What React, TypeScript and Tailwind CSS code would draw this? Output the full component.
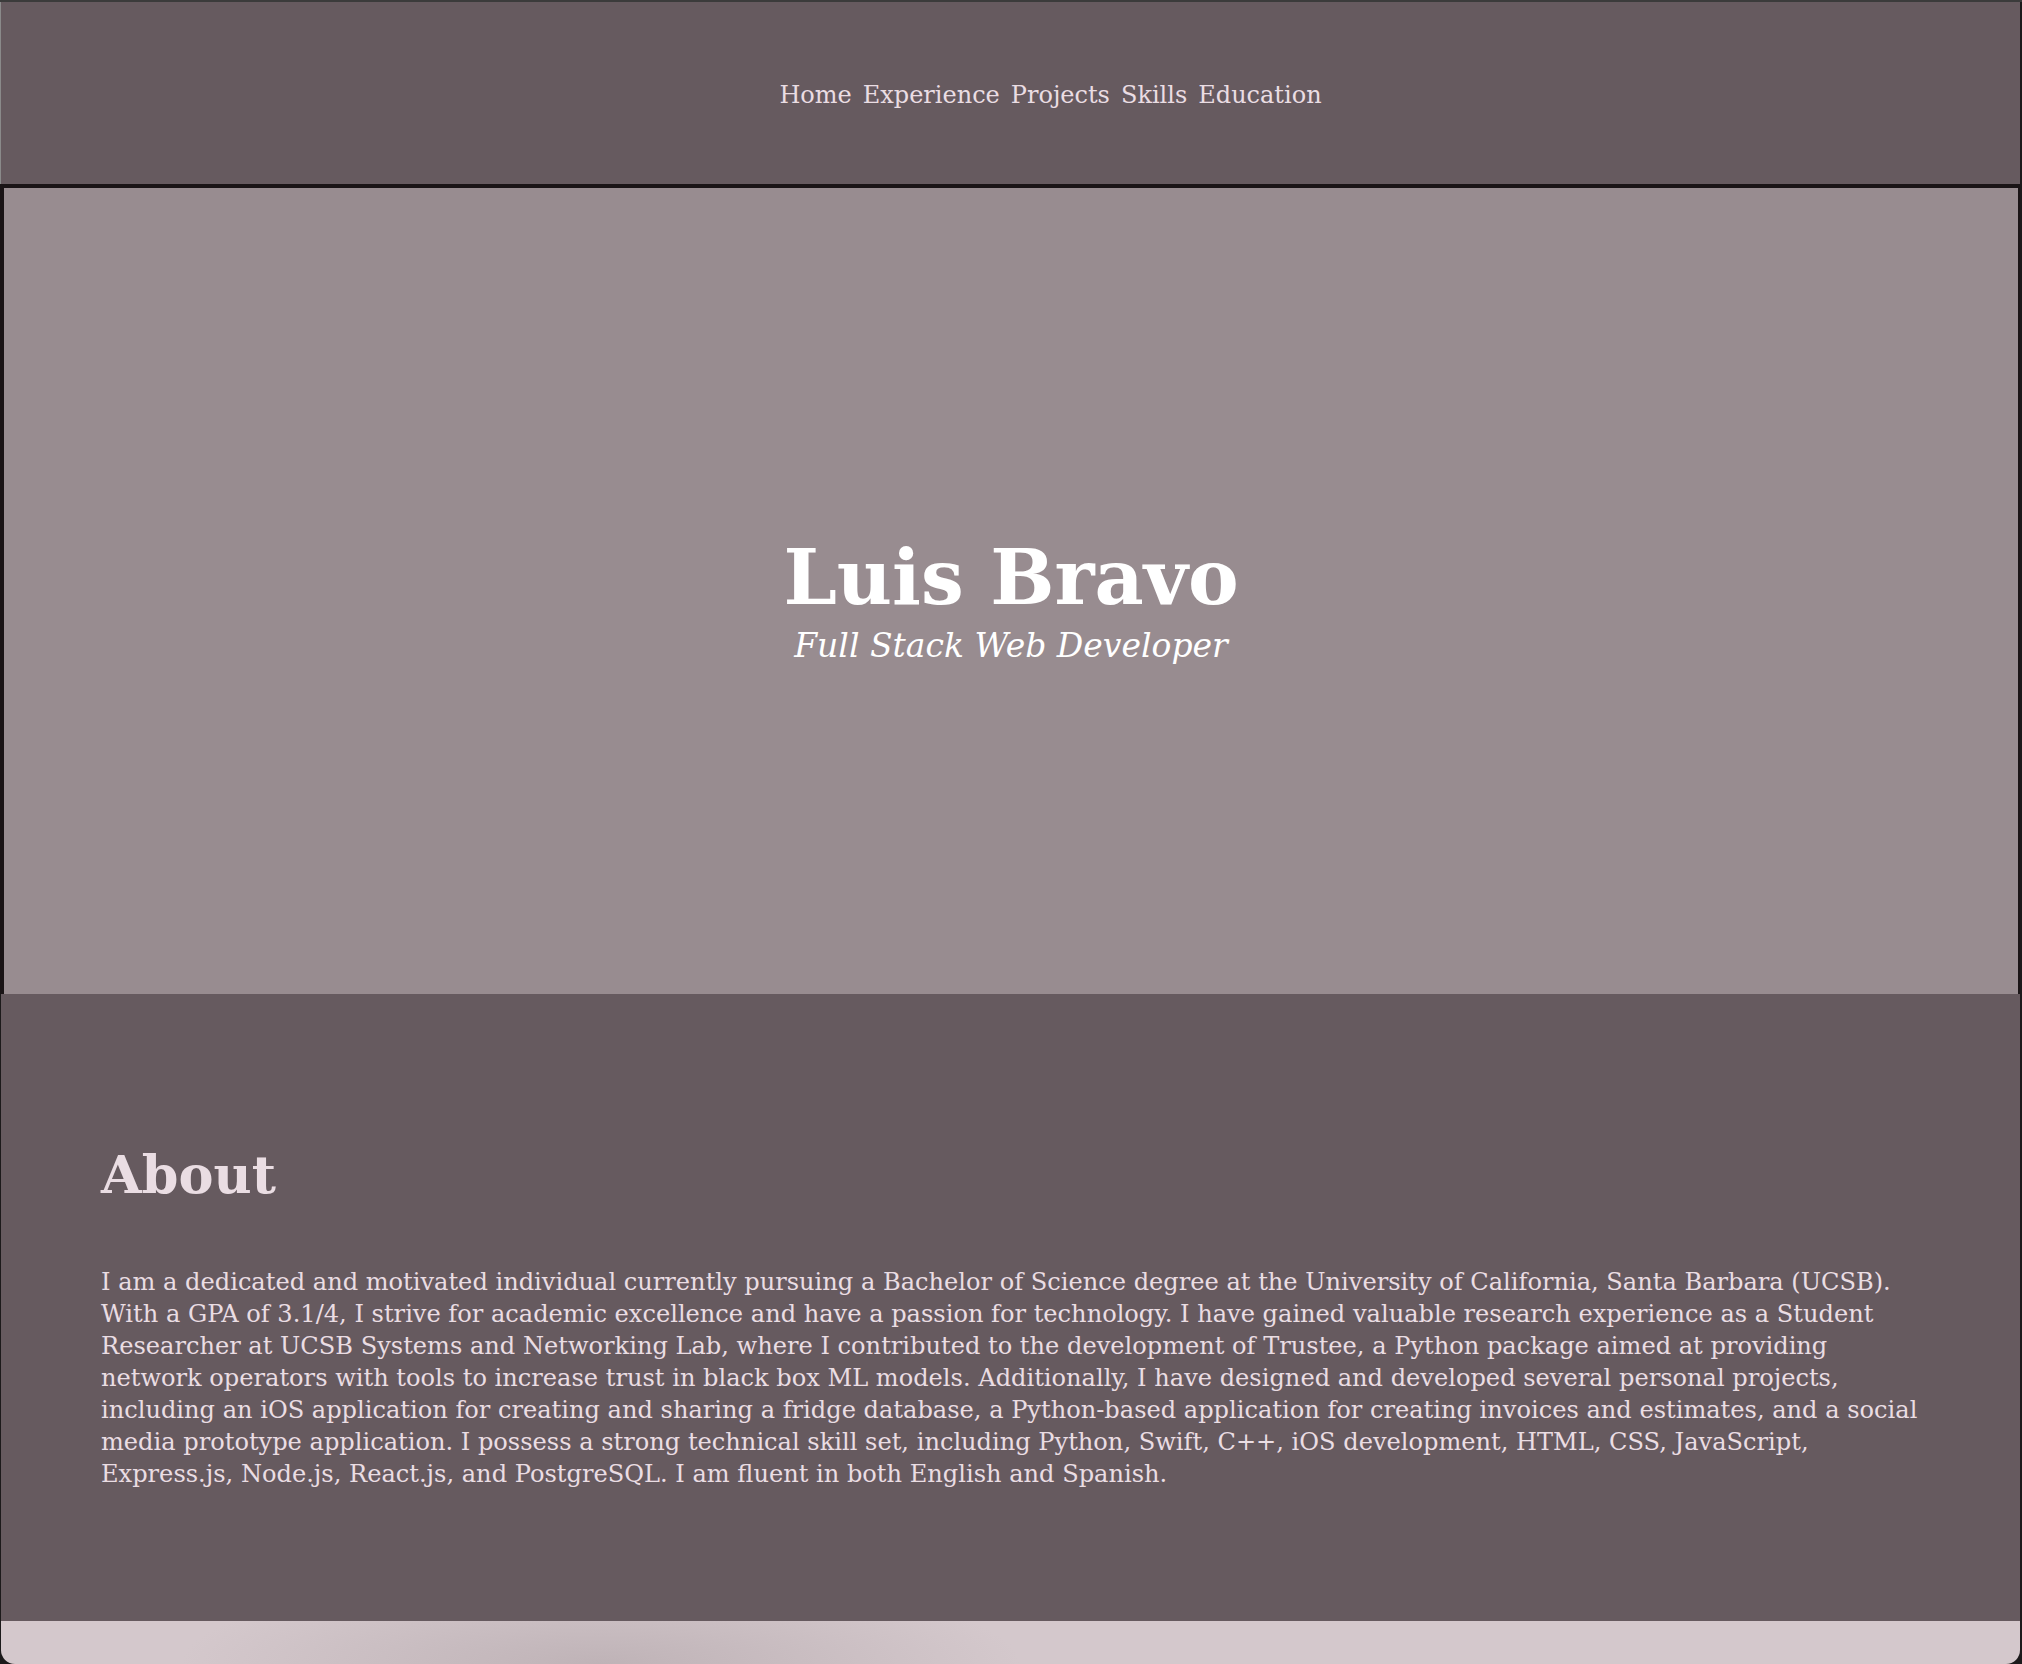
const links = ["Home", "Experience", "Projects", "Skills", "Education"];

const aboutLines = [
  "I am a dedicated and motivated individual currently pursuing a Bachelor of Science degree at the University of California, Santa Barbara (UCSB).",
  "With a GPA of 3.1/4, I strive for academic excellence and have a passion for technology. I have gained valuable research experience as a Student",
  "Researcher at UCSB Systems and Networking Lab, where I contributed to the development of Trustee, a Python package aimed at providing",
  "network operators with tools to increase trust in black box ML models. Additionally, I have designed and developed several personal projects,",
  "including an iOS application for creating and sharing a fridge database, a Python-based application for creating invoices and estimates, and a social",
  "media prototype application. I possess a strong technical skill set, including Python, Swift, C++, iOS development, HTML, CSS, JavaScript,",
  "Express.js, Node.js, React.js, and PostgreSQL. I am fluent in both English and Spanish.",
];

function Nav() {
  return (
    <nav className="h-[182px] bg-[#665a5f] border-l border-[#8a8a8a] flex items-start justify-center pl-[80px] pt-[77px]">
      <ul className="flex gap-[11px] text-[24px] leading-[32px] text-[#eadde3]">
        {links.map((l) => (
          <li key={l}>
            <a href={`#${l.toLowerCase()}`}>{l}</a>
          </li>
        ))}
      </ul>
    </nav>
  );
}

function Hero() {
  return (
    <header className="bg-[#1a1416] pl-[4px] pr-[2px] border-t-4 border-[#1a1416]">
      <div className="h-[806px] bg-[#988c90] flex flex-col items-center justify-center text-white pt-[20px]">
        <h1 className="text-[76px] font-bold leading-[84px]">Luis Bravo</h1>
        <p className="text-[33px] italic leading-[40px] mt-[6px]">Full Stack Web Developer</p>
      </div>
    </header>
  );
}

function About() {
  return (
    <section id="about" className="h-[627px] bg-[#665a5f] ml-[1px] px-[100px] pt-[146px] text-[#eadde3]">
      <h2 className="text-[52.5px] font-bold leading-[70px]">About</h2>
      <p className="mt-[56px] text-[24.1px] leading-[32px]">
        {aboutLines.map((line, i) => (
          <span key={i} className="block whitespace-nowrap">
            {line}
          </span>
        ))}
      </p>
    </section>
  );
}

export default function App() {
  return (
    <div
      className="w-[2022px] h-[1664px] bg-[#1c1a1b] overflow-hidden"
      style={{ fontFamily: '"DejaVu Serif", "Liberation Serif", serif' }}
    >
      <div className="h-[2px] bg-[#3b3b3b]" />
      <div className="mr-[2px] flex flex-col">
        <Nav />
        <Hero />
        <About />
        <div className="h-[43px] ml-[1px] rounded-b-[14px] bg-[radial-gradient(ellipse_420px_90px_at_600px_100%,#bfb3b7,#d4c8cc)]" />
      </div>
    </div>
  );
}
